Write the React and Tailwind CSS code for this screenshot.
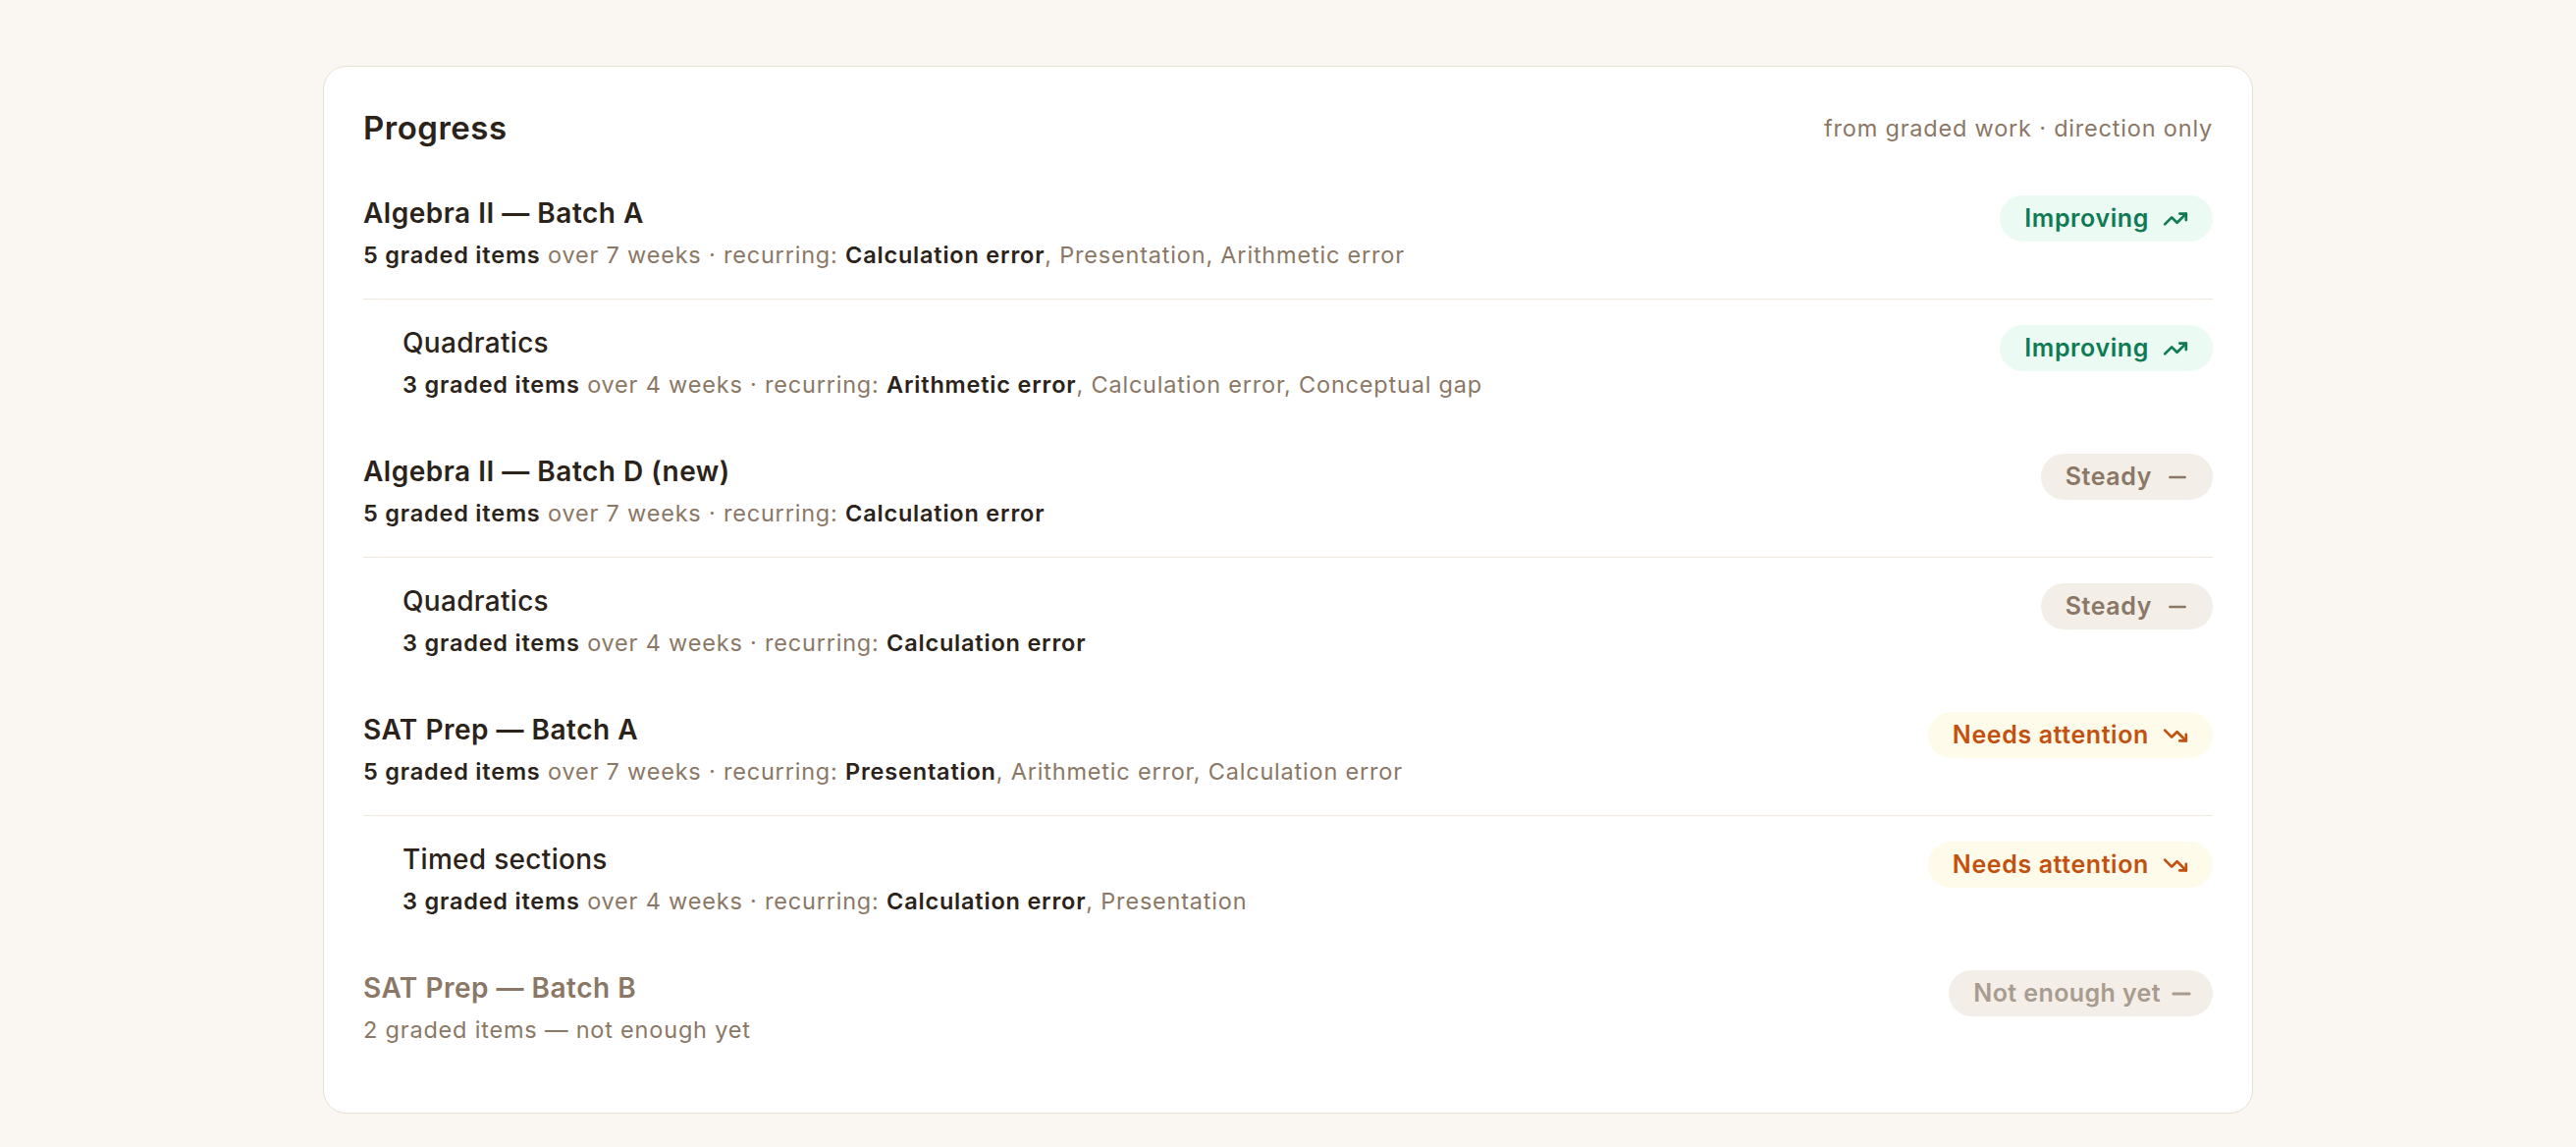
import React from 'react'
import { TrendingUp, TrendingDown, Minus } from 'lucide-react'

const groups = [
  {
    title: 'Algebra II — Batch A',
    count: 5,
    weeks: 7,
    errors: ['Calculation error', 'Presentation', 'Arithmetic error'],
    status: 'up',
    children: [
      {
        title: 'Quadratics',
        count: 3,
        weeks: 4,
        errors: ['Arithmetic error', 'Calculation error', 'Conceptual gap'],
        status: 'up',
      },
    ],
  },
  {
    title: 'Algebra II — Batch D (new)',
    count: 5,
    weeks: 7,
    errors: ['Calculation error'],
    status: 'steady',
    children: [
      { title: 'Quadratics', count: 3, weeks: 4, errors: ['Calculation error'], status: 'steady' },
    ],
  },
  {
    title: 'SAT Prep — Batch A',
    count: 5,
    weeks: 7,
    errors: ['Presentation', 'Arithmetic error', 'Calculation error'],
    status: 'down',
    children: [
      {
        title: 'Timed sections',
        count: 3,
        weeks: 4,
        errors: ['Calculation error', 'Presentation'],
        status: 'down',
      },
    ],
  },
  {
    title: 'SAT Prep — Batch B',
    count: 2,
    status: 'none',
    children: [],
  },
]

function Badge({ status }) {
  if (status === 'up') {
    return (
      <span className="flex items-center gap-[14px] h-[47px] px-[25px] rounded-full bg-[#ebfbf3] text-[#0f7a55] text-[25px] tracking-[0.6px] font-semibold -mt-[1px] shrink-0">
        Improving
        <TrendingUp size={26} strokeWidth={2.5} />
      </span>
    )
  }
  if (status === 'down') {
    return (
      <span className="flex items-center gap-[14px] h-[47px] px-[25px] rounded-full bg-[#fefbea] text-[#c2510f] text-[25px] tracking-[0.6px] font-semibold -mt-[1px] shrink-0">
        Needs attention
        <TrendingDown size={26} strokeWidth={2.5} />
      </span>
    )
  }
  if (status === 'steady') {
    return (
      <span className="flex items-center gap-[13px] h-[47px] pl-[25px] pr-[23px] rounded-full bg-[#f3eee7] text-[#8b7765] text-[25px] tracking-[0.6px] font-semibold -mt-[1px] shrink-0">
        Steady
        <Minus size={26} strokeWidth={2.5} />
      </span>
    )
  }
  return (
    <span className="flex items-center gap-[7px] h-[47px] pl-[25px] pr-[18px] rounded-full bg-[#f3eee7] text-[#a89c90] text-[25px] tracking-[0.4px] font-semibold -mt-[1px] shrink-0">
      Not enough yet
      <Minus size={28} strokeWidth={2.5} />
    </span>
  )
}

function Row({ item, child, divided }) {
  const muted = item.status === 'none'
  return (
    <div
      className={`flex items-start justify-between py-[27px] ${child ? 'pl-[40px]' : ''} ${
        divided ? 'border-b border-[#efe9e1]' : ''
      }`}
    >
      <div>
        <div
          className={`text-[28px] leading-[35px] ${
            child ? 'font-medium tracking-[0.3px]' : 'font-semibold tracking-[0.5px]'
          } ${muted ? 'text-[#8b7765]' : 'text-[#2b2219]'}`}
        >
          {item.title}
        </div>
        <div className="mt-[8px] text-[23.5px] tracking-[0.8px] leading-[34px] text-[#8b7765]">
          {muted ? (
            <span>{item.count} graded items — not enough yet</span>
          ) : (
            <>
              <span className="font-semibold text-[#2b2219]">{item.count} graded items</span> over{' '}
              {item.weeks} weeks · recurring:{' '}
              {item.errors.map((e, i) => (
                <span key={e}>
                  {i > 0 && ', '}
                  {i === 0 ? <span className="font-semibold text-[#2b2219]">{e}</span> : e}
                </span>
              ))}
            </>
          )}
        </div>
      </div>
      <Badge status={item.status} />
    </div>
  )
}

export default function App() {
  return (
    <div className="min-h-screen w-full bg-[#faf7f2] pt-[67px] pb-[35px] font-['Inter',sans-serif]">
      <div className="w-[1966px] mx-auto bg-white border border-[#e8e0d3] rounded-[24px] px-[40px] pt-[40px] pb-[40px]">
        {/* Header */}
        <div className="flex items-center justify-between h-[46px] mb-[19px]">
          <h1 className="text-[33px] tracking-[0.5px] font-semibold text-[#2b2219] m-0">Progress</h1>
          <span className="text-[23.5px] tracking-[0.8px] text-[#8b7765]">
            from graded work · direction only
          </span>
        </div>

        {/* Rows */}
        {groups.map((g) => (
          <div key={g.title}>
            <Row item={g} divided={g.children.length > 0} />
            {g.children.map((c) => (
              <Row key={c.title} item={c} child />
            ))}
          </div>
        ))}
      </div>
    </div>
  )
}
